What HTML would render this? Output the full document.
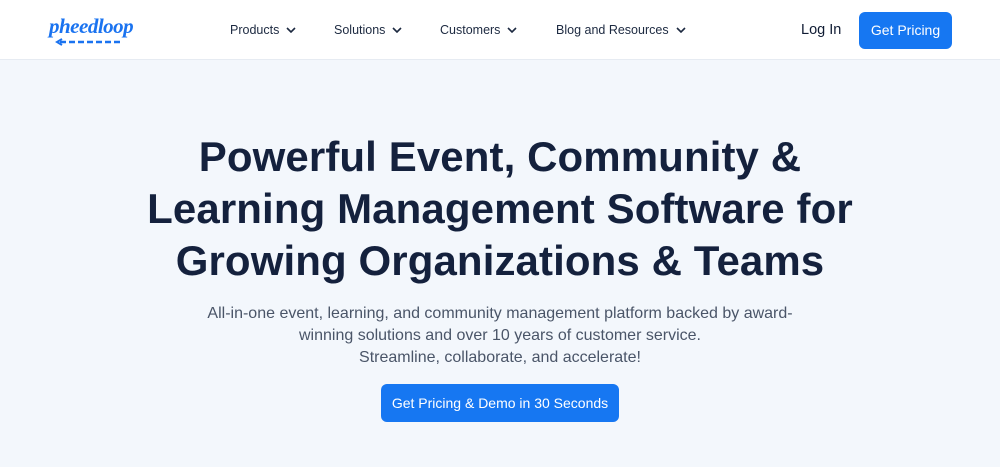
<!DOCTYPE html>
<html><head><style>
*{margin:0;padding:0;box-sizing:border-box}
body{width:1000px;height:467px;background:#f3f7fc;font-family:"Liberation Sans",sans-serif;overflow:hidden;position:relative}
.hdr{position:absolute;left:0;top:0;width:1000px;height:60px;background:#fff;border-bottom:1px solid #e6ebf2}
.logo{position:absolute;left:49px;top:14px;color:#1a73f0;font:italic bold 21px "Liberation Serif",serif;letter-spacing:-0.5px}
.nav{position:absolute;top:23px;font-size:12.5px;color:#1c2940}
.nav svg{margin-left:7px;vertical-align:1px}
.login{position:absolute;left:801px;top:22px;font-size:14.5px;color:#0f1b33}
.btn{position:absolute;background:#1677f2;color:#fff;border-radius:6px;text-align:center}
h1{position:absolute;left:0;width:1000px;top:131px;text-align:center;font-size:42px;line-height:52px;font-weight:bold;color:#14213d;letter-spacing:0.1px}
p{position:absolute;left:0;width:1000px;top:303px;text-align:center;font-size:16px;line-height:22px;color:#4a5568}
</style></head><body>
<div class="hdr">
<div class="logo">pheedloop</div>
<svg style="position:absolute;left:54px;top:38px" width="70" height="8"><path d="M6 4H68" stroke="#1a73f0" stroke-width="2.5" stroke-dasharray="6 3"/><path d="M8 1L3 4L8 7" fill="none" stroke="#1a73f0" stroke-width="2"/></svg>
<div class="nav" style="left:230px">Products<svg width="10" height="6"><path d="M1 1L5 5L9 1" fill="none" stroke="#1c2940" stroke-width="1.6"/></svg></div>
<div class="nav" style="left:334px">Solutions<svg width="10" height="6"><path d="M1 1L5 5L9 1" fill="none" stroke="#1c2940" stroke-width="1.6"/></svg></div>
<div class="nav" style="left:440px">Customers<svg width="10" height="6"><path d="M1 1L5 5L9 1" fill="none" stroke="#1c2940" stroke-width="1.6"/></svg></div>
<div class="nav" style="left:556px">Blog and Resources<svg width="10" height="6"><path d="M1 1L5 5L9 1" fill="none" stroke="#1c2940" stroke-width="1.6"/></svg></div>
<div class="login">Log In</div>
<div class="btn" style="left:859px;top:12px;width:93px;height:37px;line-height:37px;font-size:14px">Get Pricing</div>
</div>
<h1>Powerful Event, Community &amp;<br>Learning Management Software for<br>Growing Organizations &amp; Teams</h1>
<p>All-in-one event, learning, and community management platform backed by award-<br>winning solutions and over 10 years of customer service.<br>Streamline, collaborate, and accelerate!</p>
<div class="btn" style="left:381px;top:384px;width:238px;height:38px;line-height:38px;font-size:14px">Get Pricing &amp; Demo in 30 Seconds</div>
</body></html>
